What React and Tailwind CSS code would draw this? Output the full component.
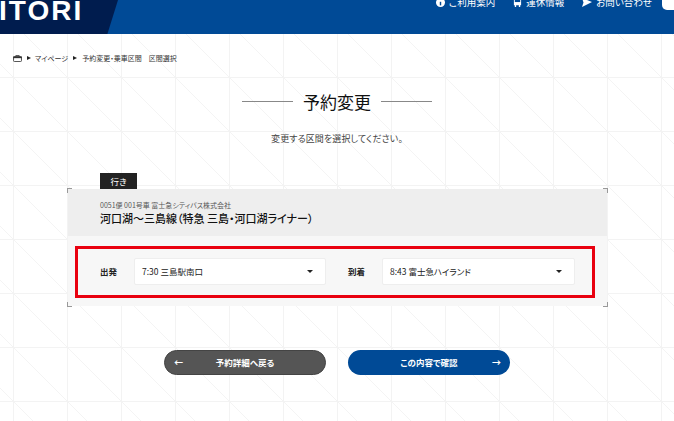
const JP = "font-['Noto_Sans_CJK_JP','Noto_Sans',sans-serif]"

function Corner({ className }) {
  return <span className={`absolute w-[5px] h-[5px] border-[#999] ${className}`} />
}

function Caret() {
  return <span className="w-0 h-0 border-x-[3px] border-x-transparent border-t-[3px] border-t-[#222]" />
}

function Select({ text }) {
  return (
    <div className="h-[27px] flex-1 bg-white border border-[#eeeeee] rounded-[2px] pl-[7px] pr-[12px] flex items-center justify-between">
      <span className="text-[8.5px] text-[#222]">{text}</span>
      <Caret />
    </div>
  )
}

function NavItem({ icon, label }) {
  return (
    <div className="flex items-center gap-[4px]">
      {icon}
      <span>{label}</span>
    </div>
  )
}

export default function App() {
  return (
    <div className={`w-[674px] h-[421px] overflow-hidden bg-white ${JP} [font-feature-settings:'palt'] bg-[linear-gradient(to_right,#f3f3f3_1px,transparent_1px),linear-gradient(to_bottom,#f3f3f3_1px,transparent_1px),linear-gradient(to_top_right,transparent_calc(50%-0.6px),#f4f4f4_50%,transparent_calc(50%+0.6px))] bg-size-[54px_54px] bg-position-[13px_23px]`}>
      {/* Header, cut off by the scroll position */}
      <header className="h-[34px] bg-[#004a96] relative overflow-hidden flex justify-between">
        <div className="w-[118px] h-full bg-[#001c4e] [clip-path:polygon(0_0,100%_0,91%_100%,0_100%)] flex">
          <span className="-mt-[3px] -ml-px font-['Liberation_Sans'] font-bold text-[28px] leading-[28px] tracking-[2px] text-white">ITORI</span>
        </div>
        <nav className="flex gap-[18px] text-white text-[9.5px] h-[9px] items-center pr-[22px] -mt-[2px]">
          <NavItem
            label="ご利用案内"
            icon={
              <svg width="9" height="9" viewBox="0 0 10 10">
                <circle cx="5" cy="5" r="5" fill="#fff" />
                <rect x="4.2" y="4.2" width="1.6" height="4" fill="#004a96" />
              </svg>
            }
          />
          <NavItem
            label="運休情報"
            icon={
              <svg width="9" height="9" viewBox="0 0 10 10" fill="#fff">
                <path d="M1 1.5 Q1 0 3 0 H7 Q9 0 9 1.5 V8 H8 V10 H6.5 V8 H3.5 V10 H2 V8 H1 Z" />
                <rect x="2" y="2" width="6" height="2.5" fill="#004a96" />
              </svg>
            }
          />
          <NavItem
            label="お問い合わせ"
            icon={
              <svg width="10" height="9" viewBox="0 0 10 9" fill="#fff">
                <path d="M0 0 L10 4 L0 9 L1.5 4.5 Z" />
              </svg>
            }
          />
        </nav>
        <span className="absolute right-[-8px] -top-[8px] w-[20px] h-[18px] bg-white rounded-[5px]" />
      </header>

      {/* Breadcrumb */}
      <div className="flex items-center mt-[19px] pl-[13px] h-[10px] text-[7px] text-[#333] leading-none">
        <svg width="9" height="7" viewBox="0 0 10 8" className="mr-[3px]">
          <path d="M3 2 V0.7 H7 V2" fill="none" stroke="#333" />
          <rect x="0.5" y="2" width="9" height="5.5" rx="1" fill="#fff" stroke="#333" />
          <rect x="0" y="1.6" width="10" height="2" fill="#333" />
        </svg>
        <span className="w-0 h-0 border-y-[2.5px] border-y-transparent border-l-[4px] border-l-[#222] mr-[4px] ml-[2px]" />
        <span>マイページ</span>
        <span className="w-0 h-0 border-y-[2.5px] border-y-transparent border-l-[4px] border-l-[#222] mx-[5px]" />
        <span>予約変更・乗車区間</span>
        <span className="ml-[7px]">区間選択</span>
      </div>

      {/* Title */}
      <div className="flex items-center justify-center mt-[24px] h-[28px] gap-[10px]">
        <span className="w-[51px] h-px bg-[#888]" />
        <h1 className="text-[17px] leading-none text-[#111]">予約変更</h1>
        <span className="w-[51px] h-px bg-[#888]" />
      </div>
      <p className="text-center text-[9px] tracking-[0.1px] text-[#444] leading-[9px] mt-[19px]">変更する区間を選択してください。</p>

      {/* Route card */}
      <section className="relative w-[539px] ml-[68px] mt-[46px]">
        <span className="absolute -top-[16px] left-[32px] w-[37px] h-[16px] bg-[#222] text-white text-[8.5px] flex items-center justify-center">行き</span>
        <Corner className="-top-px -left-px border-t border-l" />
        <Corner className="-top-px -right-px border-t border-r" />
        <Corner className="-bottom-px -left-px border-b border-l" />
        <Corner className="-bottom-px -right-px border-b border-r" />

        <div className="h-[47px] bg-[#eeeeee] pl-[32px] pt-[12px]">
          <p className="text-[7px] text-[#555] leading-[8px]">0051便 001号車 富士急シティバス株式会社</p>
          <h2 className="text-[11px] font-medium text-[#111] leading-[14px] mt-[2px]">河口湖〜三島線（特急 三島・河口湖ライナー）</h2>
        </div>

        <div className="h-[70px] bg-[#f7f7f7] pl-[32px] pr-[32px] flex items-center gap-[22px] relative">
          <div className="w-[226px] flex items-center gap-[17px]">
            <span className="text-[8.5px] font-bold text-[#222]">出発</span>
            <Select text="7:30 三島駅南口" />
          </div>
          <div className="flex-1 flex items-center gap-[17px]">
            <span className="text-[8.5px] font-bold text-[#222]">到着</span>
            <Select text="8:43 富士急ハイランド" />
          </div>
          {/* red highlight drawn over the form */}
          <span className="absolute left-[7px] right-[12px] top-[10px] bottom-[8px] border-[3px] border-[#e9000f]" />
        </div>
      </section>

      {/* Buttons */}
      <div className="flex justify-center gap-[22px] mt-[44px] text-white text-[8.5px] font-bold">
        <button className="relative w-[162px] h-[25px] rounded-full bg-[#555555] border border-[#444] flex items-center justify-center">
          <span className="absolute left-[9px] text-[9px]">←</span>
          予約詳細へ戻る
        </button>
        <button className="relative w-[162px] h-[25px] rounded-full bg-[#004a96] flex items-center justify-center">
          この内容で確認
          <span className="absolute right-[9px] text-[9px]">→</span>
        </button>
      </div>
    </div>
  )
}
